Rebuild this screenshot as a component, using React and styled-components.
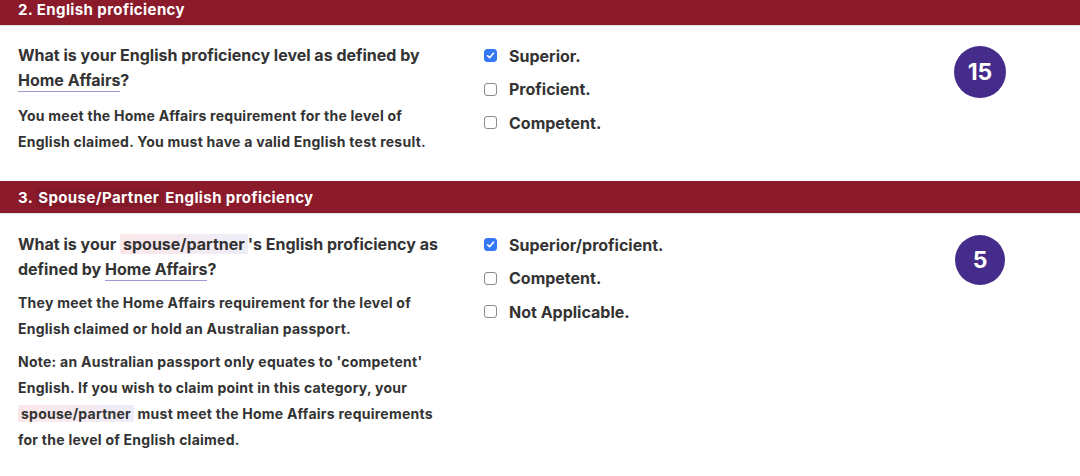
import React from "react";
import styled, { createGlobalStyle } from "styled-components";

const GlobalStyle = createGlobalStyle`
  body {
    margin: 0;
    background: #fff;
    font-family: Inter, "Noto Sans", "Liberation Sans", sans-serif;
    color: #333;
  }
`;

const Page = styled.div`
  margin-top: -7px;
`;

const Header = styled.div`
  height: 33px;
  background: #8b1a2b;
  border-bottom: 1px solid #e4e4e4;
  box-sizing: border-box;
  display: flex;
  align-items: center;
  padding: 0 18px;
  color: #fff;
  font-size: 15px;
  font-weight: 700;
  letter-spacing: 0.4px;
  white-space: pre;
`;

const HeaderTag = styled.span`
  background: rgba(0, 0, 0, 0.06);
  padding: 0 2px;
  margin-left: 3px;
  margin-right: 4px;
`;

const Body = styled.div`
  display: grid;
  grid-template-columns: 466px 1fr 52px;
  padding: ${(p) => p.$pad};
  padding-left: 18px;
  padding-right: 74px;
`;

const Question = styled.div`
  max-width: 430px;
`;

const Title = styled.p`
  margin: 0 0 ${(p) => p.$gap || "8px"};
  font-size: 16px;
  font-weight: 700;
  line-height: 25px;
`;

const Desc = styled.p`
  margin: 0 0 7px;
  font-size: 14px;
  font-weight: 700;
  line-height: 26px;
  letter-spacing: 0.25px;
`;

const Link = styled.span`
  border-bottom: 1px solid #9f98d4;
  padding-bottom: 1px;
`;

const Tag = styled.span`
  background: linear-gradient(90deg, #fbe7ea, #eeedf7);
  padding: 0 3px;
  border-radius: 2px;
`;

const Options = styled.div`
  display: flex;
  flex-direction: column;
  gap: 8.5px;
`;

const Option = styled.label`
  display: flex;
  align-items: center;
  gap: 12px;
  height: 25px;
  font-size: 16px;
  font-weight: 700;
`;

const Box = styled.span`
  width: 13px;
  height: 13px;
  box-sizing: border-box;
  border-radius: 3px;
  border: 1px solid ${(p) => (p.$checked ? "#3478f6" : "#8a8a8a")};
  background: ${(p) => (p.$checked ? "#3478f6" : "#fff")};
  display: flex;
  align-items: center;
  justify-content: center;
`;

const BadgeCol = styled.div`
  padding-top: ${(p) => p.$top};
`;

const Badge = styled.div`
  width: ${(p) => p.$size}px;
  height: ${(p) => p.$size}px;
  border-radius: 50%;
  background: #452c8a;
  color: #fff;
  display: flex;
  align-items: center;
  justify-content: center;
  font-size: 23px;
  font-weight: 700;
  margin: 0 auto;
`;

function Check({ checked, label }) {
  return (
    <Option>
      <Box $checked={checked}>
        {checked && (
          <svg width="9" height="9" viewBox="0 0 10 10">
            <path d="M1.8 5.3 L4 7.5 L8.3 2.4" fill="none" stroke="#fff" strokeWidth="1.8" strokeLinecap="round" strokeLinejoin="round" />
          </svg>
        )}
      </Box>
      {label}
    </Option>
  );
}

export default function App() {
  return (
    <Page>
      <GlobalStyle />
      <Header>2. English proficiency</Header>
      <Body $pad="17px 0 19px">
        <Question>
          <Title $gap="10px">
            What is your English proficiency level as defined by <Link>Home Affairs</Link>?
          </Title>
          <Desc>
            You meet the Home Affairs requirement for the level of English claimed. You must have a valid English test result.
          </Desc>
        </Question>
        <Options>
          <Check checked label="Superior." />
          <Check label="Proficient." />
          <Check label="Competent." />
        </Options>
        <BadgeCol $top="3px">
          <Badge $size={52}>15</Badge>
        </BadgeCol>
      </Body>

      <Header>
        3.<HeaderTag>Spouse/Partner</HeaderTag>English proficiency
      </Header>
      <Body $pad="18px 0 20px">
        <Question>
          <Title>
            What is your <Tag>spouse/partner</Tag>'s English proficiency as defined by <Link>Home Affairs</Link>?
          </Title>
          <Desc>
            They meet the Home Affairs requirement for the level of English claimed or hold an Australian passport.
          </Desc>
          <Desc>
            Note: an Australian passport only equates to 'competent' English. If you wish to claim point in this category, your <Tag>spouse/partner</Tag> must meet the Home Affairs requirements for the level of English claimed.
          </Desc>
        </Question>
        <Options>
          <Check checked label="Superior/proficient." />
          <Check label="Competent." />
          <Check label="Not Applicable." />
        </Options>
        <BadgeCol $top="3px">
          <Badge $size={50}>5</Badge>
        </BadgeCol>
      </Body>
    </Page>
  );
}
